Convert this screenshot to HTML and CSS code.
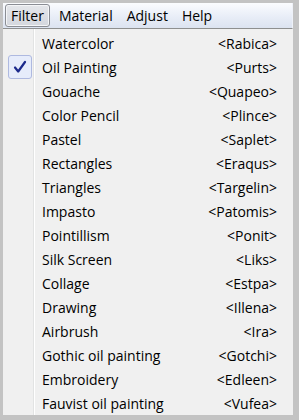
FILE: index.html
```html
<!DOCTYPE html>
<html>
<head>
<meta charset="utf-8">
<link rel="stylesheet" href="styles.css">
</head>
<body>
<div class="frame">
  <div class="menubar">
    <span class="mb-item active">Filter</span>
    <span class="mb-item">Material</span>
    <span class="mb-item">Adjust</span>
    <span class="mb-item">Help</span>
  </div>
  <div class="menu">
    <div class="row"><span class="icon"></span><span class="label">Watercolor</span><span class="key">&lt;Rabica&gt;</span></div>
    <div class="row"><span class="icon checked"><svg width="14" height="14" viewBox="0 0 14 14"><path d="M2 7.5 L5.2 11.5 L12 2" fill="none" stroke="#1c2a8c" stroke-width="2.2" stroke-linecap="round" stroke-linejoin="round"/></svg></span><span class="label">Oil Painting</span><span class="key">&lt;Purts&gt;</span></div>
    <div class="row"><span class="icon"></span><span class="label">Gouache</span><span class="key">&lt;Quapeo&gt;</span></div>
    <div class="row"><span class="icon"></span><span class="label">Color Pencil</span><span class="key">&lt;Plince&gt;</span></div>
    <div class="row"><span class="icon"></span><span class="label">Pastel</span><span class="key">&lt;Saplet&gt;</span></div>
    <div class="row"><span class="icon"></span><span class="label">Rectangles</span><span class="key">&lt;Eraqus&gt;</span></div>
    <div class="row"><span class="icon"></span><span class="label">Triangles</span><span class="key">&lt;Targelin&gt;</span></div>
    <div class="row"><span class="icon"></span><span class="label">Impasto</span><span class="key">&lt;Patomis&gt;</span></div>
    <div class="row"><span class="icon"></span><span class="label">Pointillism</span><span class="key">&lt;Ponit&gt;</span></div>
    <div class="row"><span class="icon"></span><span class="label">Silk Screen</span><span class="key">&lt;Liks&gt;</span></div>
    <div class="row"><span class="icon"></span><span class="label">Collage</span><span class="key">&lt;Estpa&gt;</span></div>
    <div class="row"><span class="icon"></span><span class="label">Drawing</span><span class="key">&lt;Illena&gt;</span></div>
    <div class="row"><span class="icon"></span><span class="label">Airbrush</span><span class="key">&lt;Ira&gt;</span></div>
    <div class="row"><span class="icon"></span><span class="label">Gothic oil painting</span><span class="key">&lt;Gotchi&gt;</span></div>
    <div class="row"><span class="icon"></span><span class="label">Embroidery</span><span class="key">&lt;Edleen&gt;</span></div>
    <div class="row"><span class="icon"></span><span class="label">Fauvist oil painting</span><span class="key">&lt;Vufea&gt;</span></div>
  </div>
</div>
</body>
</html>
```
FILE: styles.css
```css
html, body {
  margin: 0;
  padding: 0;
  background: #c3c3c3;
  width: 299px;
  height: 420px;
  overflow: hidden;
}
.frame {
  margin: 3px 6px 0 3px;
  width: 290px;
  font-family: "Open Sans", "Liberation Sans", sans-serif;
  font-size: 14px;
  color: #000;
}
.menubar {
  height: 26px;
  display: flex;
  align-items: center;
  gap: 0;
  padding-left: 2px;
  background: linear-gradient(#fbfcfe, #e8edf7 55%, #dce3f0);
  border-bottom: 1px solid #8e8f8f;
  box-sizing: border-box;
  border-right: 1px solid #eef1f8;
}
.mb-item {
  padding: 0 6px;
  height: 23px;
  line-height: 21px;
  box-sizing: border-box;
  border: 1px solid transparent;
  border-radius: 3px;
}
.mb-item.active {
  padding: 0 5px;
  margin-right: 2px;
  border-color: #8a8d94;
  background: linear-gradient(#e4e6ea, #d4d7de);
  box-shadow: inset 0 0 0 1px #f4f5f7;
}
.menu {
  background: #f0f0f0;
  padding: 2px 0 0 0;
  height: 386px;
  box-sizing: border-box;
  background-image: linear-gradient(90deg, transparent 30px, #e2e3e3 30px, #e2e3e3 31px, #ffffff 31px, #ffffff 32px, transparent 32px);
}
.row {
  height: 24px;
  display: flex;
  align-items: center;
}
.icon {
  width: 24px;
  height: 24px;
  margin-left: 5px;
  margin-right: 10px;
  box-sizing: border-box;
  display: flex;
  align-items: center;
  justify-content: center;
}
.icon.checked {
  border: 1px solid #aeb9e0;
  border-radius: 3px;
  background: #e6ecfb;
}
.label {
  flex: 1;
}
.key {
  margin-right: 16px;
}
```
